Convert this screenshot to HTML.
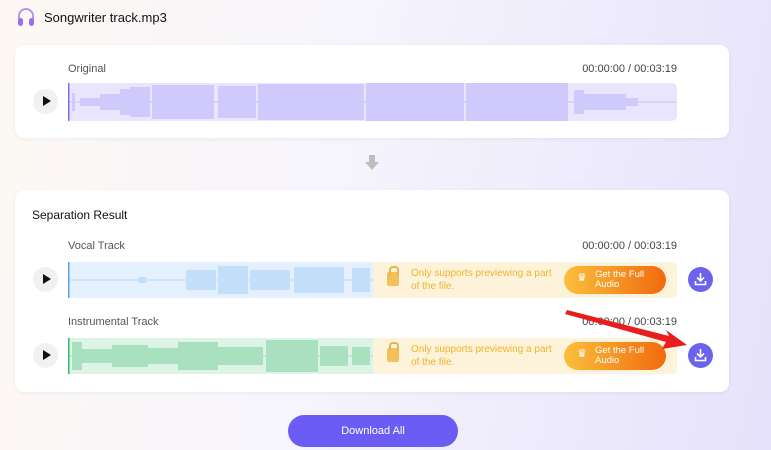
<!DOCTYPE html>
<html><head><meta charset="utf-8"><style>
*{margin:0;padding:0;box-sizing:border-box}
body{width:771px;height:450px;overflow:hidden;font-family:"Liberation Sans",sans-serif;background:linear-gradient(100deg,#fdf8f3 0%,#f7f5fc 40%,#e6e2fb 100%);position:relative;color:#222}
.abs{position:absolute}
.card{position:absolute;left:15px;width:714px;background:#fff;border-radius:9px;box-shadow:0 1px 4px rgba(0,0,0,.06)}
.lbl{position:absolute;font-size:11px;color:#555}
.time{position:absolute;font-size:11px;color:#444;right:52px}
.play{position:absolute;left:18px;width:25px;height:25px;border-radius:50%;background:#f1f1f3}
.play:after{content:"";position:absolute;left:10px;top:7px;border-left:8px solid #111;border-top:5.5px solid transparent;border-bottom:5.5px solid transparent}
.notice{position:absolute;left:373px;width:304px;height:36px;background:#fdf3da;border-radius:0 5px 5px 0}
.notice .t{position:absolute;left:38px;top:5px;font-size:10px;line-height:13px;color:#f5b22a;width:150px}
.notice .lock{position:absolute;left:14px;top:10px;width:12px;height:14px;background:#f3c05c;border-radius:2px}
.notice .lock:before{content:"";position:absolute;left:2px;top:-6px;width:6px;height:7px;border:2px solid #e8b24c;border-bottom:none;border-radius:4px 4px 0 0}
.btn{position:absolute;left:191px;top:4px;width:102px;height:28px;border-radius:14px;background:linear-gradient(90deg,#fbbf3c,#f06a0e);color:#fff;font-size:9.5px;line-height:10px;padding:4px 0 0 31px}
.btn:before{content:"♛";position:absolute;left:13px;top:7px;font-size:11px}
.dl{position:absolute;left:673px;width:25px;height:25px;border-radius:50%;background:#6b63ee}
</style></head><body>
<svg class="abs" style="left:16px;top:7px" width="20" height="20" viewBox="0 0 20 20"><path d="M3 12 V9 a7 7 0 0 1 14 0 V12" fill="none" stroke="#b792ef" stroke-width="2"/><rect x="2" y="11" width="5" height="8" rx="2.5" fill="#9b6ef0"/><rect x="13" y="11" width="5" height="8" rx="2.5" fill="#9b6ef0"/></svg>
<div class="abs" style="left:44px;top:10px;font-size:13px;color:#111">Songwriter track.mp3</div>

<div class="card" style="top:45px;height:93px">
<div class="lbl" style="left:53px;top:18px">Original</div>
<div class="time" style="top:18px">00:00:00 / 00:03:19</div>
<div class="play" style="top:44px"></div>
<svg class="abs" style="left:53px;top:38px" width="609" height="38"><rect width="609" height="38" rx="5" fill="#e9e5fd"/><path d="M0 19 H609" stroke="#cbc3fb"/><rect x="0" y="0" width="1.5" height="38" fill="#7b6ef0"/>
<g fill="#d0c9fb"><rect x="4" y="10" width="3" height="18"/><rect x="12" y="15" width="20" height="8"/><rect x="32" y="11" width="20" height="16"/><rect x="52" y="6" width="10" height="26"/><rect x="62" y="4" width="20" height="30"/><rect x="84" y="2" width="62" height="34"/><rect x="150" y="3" width="38" height="32"/><rect x="190" y="1" width="106" height="36"/><rect x="298" y="0" width="98" height="38"/><rect x="398" y="0" width="102" height="38"/><rect x="506" y="7" width="10" height="24"/><rect x="516" y="11" width="42" height="16"/><rect x="558" y="15" width="12" height="8"/></g></svg>
</div>

<svg class="abs" style="left:365px;top:155px" width="14" height="16"><path d="M4 0 H10 V7 H14 L7 15 L0 7 H4Z" fill="#bdbdbd"/></svg>

<div class="card" style="top:190px;height:202px">
<div class="abs" style="left:17px;top:18px;font-size:12px;color:#111">Separation Result</div>
<div class="lbl" style="left:53px;top:50px">Vocal Track</div>
<div class="time" style="top:50px">00:00:00 / 00:03:19</div>
<div class="play" style="top:77px"></div>
<svg class="abs" style="left:53px;top:72px" width="305" height="36"><rect width="305" height="36" fill="#e4f0fd"/><path d="M0 18 H305" stroke="#b9d8f6"/><rect width="1.5" height="36" fill="#55a7ee"/><g fill="#c2def8"><rect x="70" y="15" width="8" height="6"/><rect x="118" y="8" width="30" height="20"/><rect x="150" y="4" width="30" height="28"/><rect x="182" y="8" width="40" height="20"/><rect x="226" y="5" width="50" height="26"/><rect x="284" y="6" width="18" height="24"/></g></svg>
<div class="notice" style="top:72px;left:358px"><div class="lock"></div><div class="t">Only supports previewing a part of the file.</div><div class="btn">Get the Full<br>Audio</div></div>
<div class="dl" style="top:77px"><svg width="25" height="25"><path d="M12.5 6 V14 M9 10.5 L12.5 14 L16 10.5 M7.5 14 V17.5 H17.5 V14" fill="none" stroke="#fff" stroke-width="1.6"/></svg></div>

<div class="lbl" style="left:53px;top:126px">Instrumental Track</div>
<div class="time" style="top:126px">00:00:00 / 00:03:19</div>
<div class="play" style="top:153px"></div>
<svg class="abs" style="left:53px;top:148px" width="305" height="36"><rect width="305" height="36" fill="#ddf3e6"/><path d="M0 18 H305" stroke="#a8dfbd"/><rect width="1.5" height="36" fill="#2fbb6a"/><g fill="#a9e1c0"><rect x="4" y="4" width="10" height="28"/><rect x="14" y="11" width="30" height="14"/><rect x="44" y="7" width="36" height="22"/><rect x="80" y="10" width="30" height="16"/><rect x="110" y="4" width="40" height="28"/><rect x="150" y="9" width="45" height="18"/><rect x="198" y="2" width="52" height="32"/><rect x="252" y="8" width="28" height="20"/><rect x="284" y="9" width="18" height="18"/></g></svg>
<div class="notice" style="top:148px;left:358px"><div class="lock"></div><div class="t">Only supports previewing a part of the file.</div><div class="btn">Get the Full<br>Audio</div></div>
<div class="dl" style="top:153px"><svg width="25" height="25"><path d="M12.5 6 V14 M9 10.5 L12.5 14 L16 10.5 M7.5 14 V17.5 H17.5 V14" fill="none" stroke="#fff" stroke-width="1.6"/></svg></div>
</div>

<svg class="abs" style="left:565px;top:306px" width="125" height="45"><path d="M2 4 L104 30 L101 24 L122 39 L97 43 L101 36 L0 8Z" fill="#e81e1e"/></svg>

<div class="abs" style="left:288px;top:415px;width:170px;height:32px;border-radius:16px;background:#6b5cf6;color:#fff;font-size:11px;text-align:center;line-height:32px">Download All</div>
</body></html>
